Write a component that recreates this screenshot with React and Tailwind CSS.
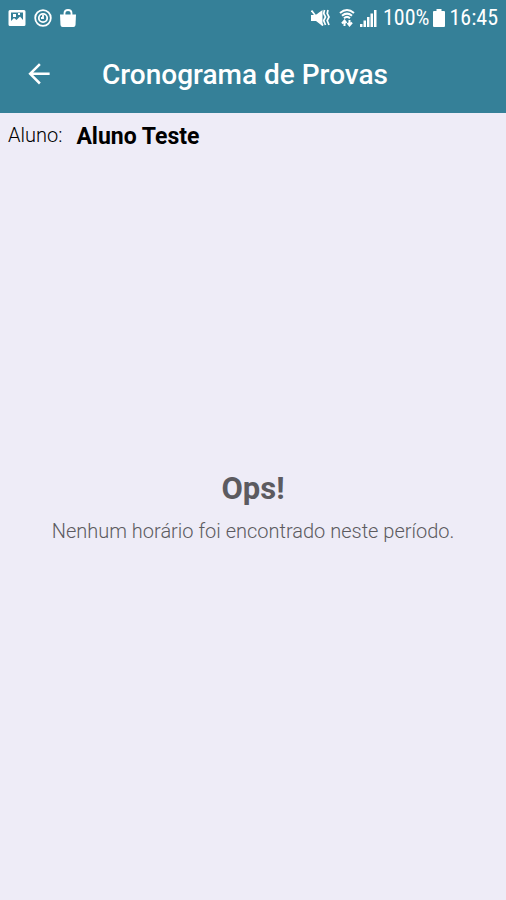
export default function App() {
  return (
    <div className="flex min-h-screen flex-col bg-[#eeecf7] font-['Roboto',sans-serif]">
      <header className="bg-[#358098] text-white">
        <div className="flex h-[35px] items-center justify-between px-2">
          <div className="flex items-center gap-2">
            <svg className="h-[18px] w-[18px]" viewBox="0 0 18 18" aria-hidden="true">
              <path fillRule="evenodd" fill="currentColor" d="M2 1H16Q17.500 1 17.500 2.500V15.500Q17.500 17 16 17H2Q0.500 17 0.500 15.500V2.500Q0.500 1 2 1ZM3 3.500V12L6 9L8.500 11L12 7.500L15 11V3.500ZM5 5H8V8H5ZM10 4H12V6H10Z" />
            </svg>
            <svg className="h-[18px] w-[18px]" viewBox="0 0 18 18" fill="none" stroke="currentColor" aria-hidden="true">
              <circle cx="9" cy="9" r="7.8" strokeWidth="1.8" />
              <circle cx="9" cy="9" r="4.2" strokeWidth="1.8" />
              <path d="M9 6V9H7" strokeWidth="1.8" />
            </svg>
            <svg className="h-[18px] w-[18px]" viewBox="0 0 18 18" fill="currentColor" aria-hidden="true">
              <path d="M0 5.500H16L15.500 16Q15.300 18 13.500 18H2.500Q0.700 18 0.500 16Z" />
              <path d="M4.500 7V4Q4.500 1 8 1T11.500 4V7" fill="none" stroke="currentColor" strokeWidth="1.800" />
            </svg>
          </div>
          <div className="flex items-center gap-1 font-['Roboto_Condensed','Roboto',sans-serif] text-[22px]">
            <div className="flex items-center gap-2">
              <svg className="h-5 w-5" viewBox="0 0 20 20" fill="currentColor" aria-hidden="true">
                <path d="M0 7H4.500L11.500 2V18L5 13H0Z" />
                <path d="M3.500 2.500L6 6" stroke="#358098" strokeWidth="1.200" />
                <path d="M0.500 2.500L12 17.500" stroke="currentColor" strokeWidth="1.800" />
                <path d="M13.500 2L12.700 5.500L14.500 9L12.700 12.500L14.500 17M17 2L16.200 5.500L18 9L16.200 12.500L18 17" fill="none" stroke="currentColor" strokeWidth="1.700" />
              </svg>
              <svg className="h-5 w-4" viewBox="0 0 16 20" fill="none" stroke="currentColor" strokeWidth="2" aria-hidden="true">
                <path d="M1 5Q8 -1 15 5M3 7.800Q8 3.500 13 7.800M5 10.300Q8 7.500 11 10.300" />
                <path d="M5.500 18V13M3 15.500L5.500 12.500L7.500 15M10.500 12V17M8.500 15L10.500 17.500L13 14.500" />
              </svg>
            </div>
            <svg className="h-5 w-5" viewBox="0 0 20 20" fill="currentColor" aria-hidden="true">
              <path d="M1 16H3.500V19H1ZM4.500 12.500H7V19H4.500ZM8 9H10.500V19H8ZM11.500 5.500H14V19H11.500ZM15 2H17.500V19H15Z" />
            </svg>
            <span>100%</span>
            <svg className="h-[18px] w-3" viewBox="0 0 12 18" fill="currentColor" aria-hidden="true">
              <path d="M3.500 0H8.500V2H11Q12 2 12 3V17Q12 18 11 18H1Q0 18 0 17V3Q0 2 1 2H3.500Z" />
            </svg>
            <span>16:45</span>
          </div>
        </div>
        <div className="flex h-[78px] items-center gap-12 px-6 pt-px">
          <button type="button" aria-label="Voltar">
            <svg className="h-[30px] w-[30px]" viewBox="0 0 24 24" fill="currentColor" aria-hidden="true">
              <path d="M20.500 10H7.330l6.090-6.090L12 2.500 3.500 11l8.500 8.500 1.410-1.410L7.330 12H20.500v-2z" />
            </svg>
          </button>
          <h1 className="text-[28px] leading-8 font-medium">Cronograma de Provas</h1>
        </div>
      </header>
      <div className="flex items-start gap-3.5 px-2 pt-2">
        <span className="text-xl leading-7 font-light text-black">Aluno:</span>
        <span className="text-[23px] leading-8 font-bold text-black">Aluno Teste</span>
      </div>
      <main className="flex flex-1 flex-col items-center justify-center gap-2 pb-10 text-[#5c5b60]">
        <h2 className="text-[31px] leading-10 font-bold">Ops!</h2>
        <p className="text-xl leading-7 font-light">Nenhum horário foi encontrado neste período.</p>
      </main>
    </div>
  );
}
